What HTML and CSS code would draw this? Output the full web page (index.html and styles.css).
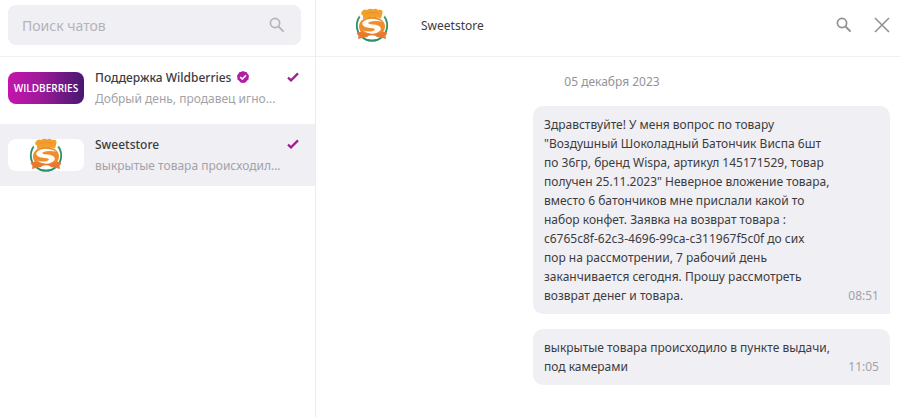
FILE: index.html
```html
<!DOCTYPE html>
<html lang="ru">
<head>
  <meta charset="UTF-8" />
  <meta name="viewport" content="width=device-width, initial-scale=1" />
  <title>Чаты</title>
  <link rel="stylesheet" href="styles.css">
</head>
<body>
  <!-- Shared shapes -->
  <svg class="sprite" aria-hidden="true">
    <symbol id="icon-search" viewBox="0 0 16 16">
      <circle cx="6" cy="6" r="4.6" fill="none" stroke="currentColor" stroke-width="1.7" />
      <path d="M9.4 9.4L14.6 14.6" fill="none" stroke="currentColor" stroke-width="2" />
    </symbol>
    <symbol id="icon-check" viewBox="0 0 12 10">
      <path d="M1 5.6L4 8.4L11 1.4" fill="none" stroke="currentColor" stroke-width="2.2" />
    </symbol>
    <symbol id="logo-sweetstore" viewBox="0 0 34 34">
      <circle cx="17" cy="17.5" r="15.2" fill="#fffdf6" stroke="#2a9168" stroke-width="1.8" />
      <path d="M4 8L7 1H27L30 8L26 11H8Z" fill="#fffdf6" />
      <path d="M6.500 4Q9 .5 12 2Q15 0 18 1.500Q21 0 23 2Q28 1 27.500 5L26 10.500Q17 7 8 11L8 7.500Q5.500 6.500 6.500 4Z" fill="#f2a02c" />
      <path d="M10.500 5.500Q17 3.500 24 5" fill="none" stroke="#e8892a" stroke-width=".8" />
      <ellipse cx="17" cy="18.500" rx="13" ry="10" fill="#ee8d2e" />
      <path d="M27.500 13.500Q19 9.500 12 11.500Q4.500 14.500 8.500 18Q11.500 20 18 20.200Q21.500 21 18.500 22.700Q14 24.500 8 22.500Q14 27 21 25.200Q28.500 22 24.500 18.200Q21.500 16.300 15.500 16.200Q11.500 15.500 14.500 14Q19 12.300 27.500 13.500Z" fill="#fffdf6" />
      <path d="M1.500 25L6 23.500Q17 28.500 28 23.500L32.500 25L30.500 28L31 31Q26 29.500 22 29H12Q8 29.500 3 31L3.500 28Z" fill="#ea7830" />
      <path d="M13 28Q17 26.500 21 28L22.500 30.500H11.500Z" fill="#fff" />
      <path d="M11 31.600Q17 33.800 23 31.600" fill="none" stroke="#2a9168" stroke-width="1.800" />
    </symbol>
  </svg>

  <div class="messenger">
    <aside class="sidebar">
      <form class="search">
        <label class="search-box">
          <input class="search-input" type="search" placeholder="Поиск чатов" aria-label="Поиск чатов" />
          <svg class="icon icon-search"><use href="#icon-search" /></svg>
        </label>
      </form>
      <nav class="chat-list">
        <a class="chat" href="#">
          <span class="thumb thumb-wb">WILDBERRIES</span>
          <span class="chat-body">
            <span class="chat-top">
              <span class="chat-name">Поддержка Wildberries</span>
              <svg class="verified" viewBox="0 0 12 12">
                <path d="M6 0L7.700 .7L9.700 1.300L10.700 3L12 4.500L11.700 6.500L11.500 8.500L9.900 9.800L8.500 11.500L6 12L3.500 11.500L2.100 9.800L.5 8.500L.3 6.500L0 4.500L1.300 3L2.300 1.300L4.300 .7Z" fill="#b01fa3" />
                <path d="M3.200 6L5.300 8.100L9 4.300" fill="none" stroke="#fff" stroke-width="1.500" />
              </svg>
              <svg class="check"><use href="#icon-check" /></svg>
            </span>
            <span class="chat-preview">Добрый день, продавец игно...</span>
          </span>
        </a>
        <a class="chat chat-active" href="#">
          <span class="thumb"><svg class="logo"><use href="#logo-sweetstore" /></svg></span>
          <span class="chat-body">
            <span class="chat-top">
              <span class="chat-name">Sweetstore</span>
              <svg class="check"><use href="#icon-check" /></svg>
            </span>
            <span class="chat-preview">выкрытые товара происходил...</span>
          </span>
        </a>
      </nav>
    </aside>

    <main class="dialog">
      <header class="dialog-header">
        <svg class="logo"><use href="#logo-sweetstore" /></svg>
        <h1 class="dialog-title">Sweetstore</h1>
        <button class="icon-button" type="button" aria-label="Поиск">
          <svg class="icon icon-search"><use href="#icon-search" /></svg>
        </button>
        <button class="icon-button" type="button" aria-label="Закрыть">
          <svg class="icon" viewBox="0 0 16 16"><path d="M1 1L15 15M15 1L1 15" fill="none" stroke="currentColor" stroke-width="1.500" /></svg>
        </button>
      </header>
      <div class="messages">
        <time class="date">05 декабря 2023</time>
        <article class="message">
          <p class="message-text">Здравствуйте! У меня вопрос по товару
"Воздушный Шоколадный Батончик Виспа 6шт
по 36гр, бренд Wispa, артикул 145171529, товар
получен 25.11.2023" Неверное вложение товара,
вместо 6 батончиков мне прислали какой то
набор конфет. Заявка на возврат товара :
c6765c8f-62c3-4696-99ca-c311967f5c0f до сих
пор на рассмотрении, 7 рабочий день
заканчивается сегодня. Прошу рассмотреть
возврат денег и товара.</p>
          <time class="message-time">08:51</time>
        </article>
        <article class="message">
          <p class="message-text">выкрытые товара происходило в пункте выдачи,
под камерами</p>
          <time class="message-time">11:05</time>
        </article>
      </div>
    </main>
  </div>
</body>
</html>
```
FILE: styles.css
```css
* {
  box-sizing: border-box;
}
body {
  margin: 0;
  font-family: "Noto Sans", "Open Sans", sans-serif;
  font-size: 12px;
  line-height: 19px;
  color: #3c3c40;
  background: #fff;
}
.sprite {
  display: none;
}
.messenger {
  display: flex;
  min-height: 100vh;
}

/* Chat list */
.sidebar {
  width: 35%;
  min-width: 316px;
  flex-shrink: 0;
  border-right: 1px solid #ececef;
}
.search {
  height: 57px;
  padding: 5px 14px 0 8px;
  border-bottom: 1px solid #f0f0f2;
}
.search-box {
  display: flex;
  align-items: center;
  height: 40px;
  padding: 0 16px 0 14px;
  border-radius: 8px;
  background: #f0eff4;
  color: #b4b3b9;
}
.search-input {
  flex: 1;
  min-width: 0;
  padding: 0;
  border: none;
  outline: none;
  background: none;
  font-family: inherit;
  font-size: 14px;
  color: #3c3c40;
}
.search-input::placeholder {
  color: #b4b3b9;
}
.icon {
  display: block;
  width: 16px;
  height: 16px;
}
.chat-list {
  display: flex;
  flex-direction: column;
  gap: 5px;
}
.chat {
  display: flex;
  align-items: center;
  gap: 11px;
  height: 62px;
  padding: 0 16px 0 8px;
  color: inherit;
  text-decoration: none;
}
.chat-active {
  background: #f0eff4;
}
.thumb {
  display: flex;
  align-items: center;
  justify-content: center;
  flex-shrink: 0;
  width: 76px;
  height: 32px;
  border-radius: 8px;
  background: #fff;
}
.thumb-wb {
  background: linear-gradient(90deg, #c514ac, #a01a9c 40%, #47186f);
  color: #fff;
  font-family: "Open Sans", sans-serif;
  font-size: 10px;
  font-weight: 600;
}
.logo {
  display: block;
  flex-shrink: 0;
  width: 34px;
  height: 34px;
}
.chat-body {
  flex: 1;
  min-width: 0;
}
.chat-top {
  display: flex;
  align-items: center;
  gap: 6px;
  height: 22px;
}
.chat-name {
  font-weight: 500;
}
.verified {
  width: 12px;
  height: 12px;
}
.check {
  width: 12px;
  height: 10px;
  margin-left: auto;
  color: #a01f8e;
}
.chat-preview {
  display: block;
  overflow: hidden;
  white-space: nowrap;
  text-overflow: ellipsis;
  line-height: 22px;
  color: #a3a2a8;
}

/* Open dialog */
.dialog {
  flex: 1;
  min-width: 0;
}
.dialog-header {
  display: flex;
  align-items: center;
  gap: 22px;
  height: 57px;
  padding: 0 10px 6px 39px;
  border-bottom: 1px solid #f0f0f2;
}
.dialog-title {
  flex: 1;
  margin: 0 0 0 10px;
  font-size: 12px;
  font-weight: 400;
}
.icon-button {
  padding: 0;
  border: none;
  background: none;
  color: #8f8f92;
  cursor: pointer;
}
.messages {
  display: flex;
  flex-direction: column;
  align-items: flex-end;
  gap: 15px;
  padding: 15px 10px 15px 18px;
}
.date {
  align-self: center;
  color: #949398;
}
.message {
  display: flex;
  align-items: flex-end;
  gap: 8px;
  width: 357px;
  max-width: 100%;
  padding: 9px 11px;
  border-radius: 10px 10px 0 10px;
  background: #f0eff4;
}
.message-text {
  flex: 1;
  margin: 0;
  white-space: pre-line;
}
.message-time {
  color: #a3a2a8;
}
```
